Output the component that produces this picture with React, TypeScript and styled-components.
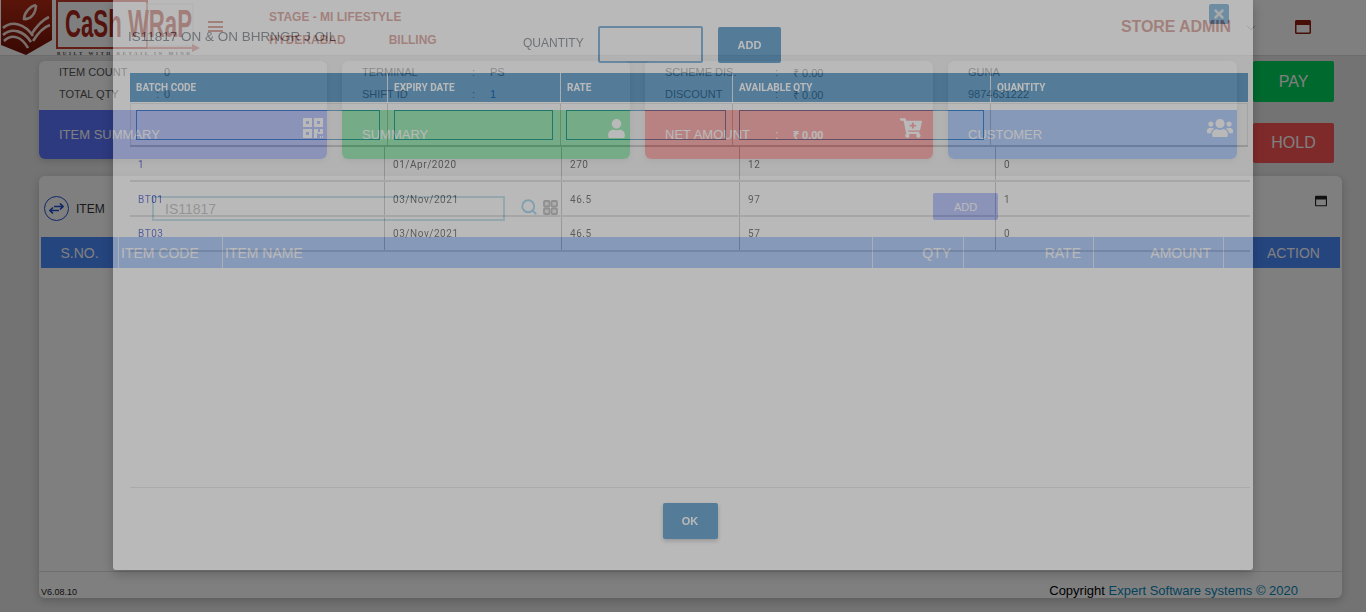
import React from "react";
import styled, { createGlobalStyle } from "styled-components";
import { ChevronDown, Search } from "lucide-react";
import { FaCartPlus, FaRegWindowMaximize, FaTimes, FaUser, FaUsers } from "react-icons/fa";

const Global = createGlobalStyle`
  html, body { margin: 0; padding: 0; height: 612px; overflow: hidden; background: #e6e6e6; }
  * { box-sizing: border-box; }
  body { font-family: "Liberation Sans", Arial, sans-serif; }
`;

const navRed = "#a83024";

const Page = styled.div`
  width: 1366px;
  height: 612px;
  display: flex;
  flex-direction: column;
  overflow: hidden;
`;
const Nav = styled.header`
  height: 56px;
  flex: none;
  background: #fff;
  border-bottom: 1px solid #d8d8d8;
  display: flex;
  align-items: stretch;
`;
const LogoWrap = styled.div`
  width: 200px;
  flex: none;
  display: flex;
`;
const Burger = styled.div`
  width: 15px;
  height: 11px;
  margin: 21px 0 0 8px;
  border-top: 2px solid ${navRed};
  border-bottom: 2px solid ${navRed};
  position: relative;
  &::after { content: ""; position: absolute; left: 0; right: 0; top: 2.5px; height: 2px; background: ${navRed}; }
`;
const NavInfo = styled.div`
  margin-left: 46px;
  padding-top: 10px;
  width: 300px;
  color: ${navRed};
  font-size: 12px;
  font-weight: 700;
  display: flex;
  flex-direction: column;
  gap: 9px;
`;
const NavLine = styled.div`
  height: 14px;
  display: flex;
  gap: 43px;
  white-space: nowrap;
`;
const NavRight = styled.div`
  margin-left: auto;
  display: flex;
  align-items: center;
  height: 54px;
  color: ${navRed};
  padding-right: 55px;
`;
const Admin = styled.span`
  font-size: 16px;
  font-weight: 700;
  letter-spacing: -.1px;
`;
const Chevron = styled.span`
  display: flex;
  margin: 2px 0 0 13px;
  color: #555;
`;
const NavWindow = styled.span`
  display: flex;
  margin-left: 37px;
  font-size: 16px;
  color: #8f1f0c;
  stroke: #8f1f0c;
  stroke-width: 24px;
`;

const SummaryRow = styled.section`
  height: 115px;
  margin-top: 5px;
  padding-left: 39px;
  display: flex;
  gap: 15px;
  flex: none;
`;
const Card = styled.div`
  width: ${p => p.$w ?? 288}px;
  height: 98px;
  border-radius: 6px;
  overflow: hidden;
  background: #fff;
  box-shadow: 0 2px 6px rgba(0,0,0,.15);
  display: flex;
  flex-direction: column;
`;
const CardInfo = styled.div`
  height: 49px;
  padding: 0 0 0 20px;
  font-size: 11px;
  color: #555;
`;
const InfoLine = styled.div`
  height: 22px;
  display: flex;
  align-items: center;
`;
const InfoLabel = styled.span`
  width: ${p => p.$w ?? 110}px;
  flex: none;
  white-space: nowrap;
`;
const InfoColon = styled.span`
  width: ${p => p.$w ?? 18}px;
  flex: none;
`;
const InfoValue = styled.span`
  color: ${p => p.$c ?? "inherit"};
`;
const CardBar = styled.div`
  height: 49px;
  background: ${p => p.$bg};
  color: #fff;
  font-size: 13px;
  padding: 0 ${p => p.$pr ?? 4}px 0 20px;
  display: flex;
  align-items: center;
  justify-content: space-between;
`;
const BarIcon = styled.span`
  display: flex;
  margin: 0 0 ${p => p.$up ?? 13}px 0;
  font-size: ${p => p.$size ?? 22}px;
`;
const NetValue = styled.b`
  font-size: 11px;
  font-weight: 700;
`;
const ActionCol = styled.div`
  width: 81px;
  display: flex;
  flex-direction: column;
  gap: 21px;
  margin-left: 1px;
`;
const ActionBtn = styled.div`
  height: ${p => p.$h}px;
  background: ${p => p.$bg};
  color: #fff;
  font-size: 16px;
  border-radius: 2px;
  display: flex;
  align-items: center;
  justify-content: center;
`;

const Panel = styled.section`
  width: 1303px;
  height: 422px;
  margin-left: 39px;
  background: #fff;
  border-radius: 6px;
  box-shadow: 0 3px 8px rgba(0,0,0,.2);
  display: flex;
  flex-direction: column;
  flex: none;
`;
const PanelHead = styled.div`
  height: 61px;
  padding: 17px 15px 0 5px;
  display: flex;
  align-items: flex-start;
  flex: none;
`;
const RoundIcon = styled.span`
  width: 25px;
  height: 25px;
  margin-top: 3px;
  border: 1px solid #2050d0;
  border-radius: 50%;
  display: flex;
  align-items: center;
  justify-content: center;
  color: #2050d0;
  flex: none;
`;
const ItemLabel = styled.span`
  margin: 9px 0 0 7px;
  font-size: 12px;
  color: #333;
  width: 76px;
`;
const ItemInput = styled.div`
  width: 353px;
  height: 25px;
  margin-top: 3px;
  border: 2px solid #7db8d4;
  padding-left: 11px;
  display: flex;
  align-items: center;
  font-size: 14px;
  color: #777;
`;
const SearchIcon = styled.span`
  display: flex;
  margin: 5px 0 0 15px;
  color: #2f9fd6;
`;
const GridIcon = styled.span`
  display: flex;
  margin: 7px 0 0 5px;
`;
const PanelAdd = styled.div`
  width: 65px;
  height: 27px;
  margin-left: 375px;
  background: #5a74ff;
  border-radius: 2px;
  color: #fff;
  font-size: 11px;
  display: flex;
  align-items: center;
  justify-content: center;
`;
const PanelWindow = styled.span`
  display: flex;
  margin: 2px 0 0 auto;
  font-size: 12px;
  color: #222;
  stroke: #222;
  stroke-width: 24px;
`;
const TableHead = styled.div`
  margin: 0 2px;
  height: 31px;
  background: #4a8aff;
  color: #fff;
  font-size: 14px;
  display: grid;
  grid-template-columns: 77px 104px 650px 91px 130px 130px 117px;
  flex: none;
`;
const HeadCell = styled.div`
  padding: 0 ${p => p.$pad ?? 2}px;
  border-left: ${p => (p.$first ? "0" : "1px solid rgba(255,255,255,.7)")};
  display: flex;
  align-items: center;
  justify-content: ${p => p.$j ?? "flex-start"};
  white-space: nowrap;
`;
const PanelBody = styled.div`
  flex: 1;
`;
const PanelFoot = styled.footer`
  height: 27px;
  flex: none;
  border-top: 1px solid #ddd;
  padding: 0 44px 0 2px;
  display: flex;
  justify-content: space-between;
  align-items: flex-end;
`;
const Version = styled.span`
  font-size: 9px;
  padding-bottom: 1px;
  color: #222;
`;
const Copy = styled.span`
  font-size: 13px;
  color: #000;
  a { color: #0a86b8; text-decoration: none; }
`;

const Overlay = styled.div`
  position: fixed;
  inset: 0;
  background: rgba(0,0,0,.5);
`;
const Modal = styled.div`
  position: fixed;
  left: 113px;
  top: 0;
  width: 1140px;
  height: 570px;
  background: #fff;
  opacity: .45;
  border-radius: 0 0 3px 3px;
  display: flex;
  flex-direction: column;
  padding: 0 3px 0 17px;
  box-shadow: 0 4px 12px rgba(0,0,0,.5);
  font-family: Roboto, "Liberation Sans", sans-serif;
`;
const ModalHead = styled.div`
  height: 73px;
  flex: none;
  position: relative;
  display: flex;
  align-items: flex-start;
`;
const ModalTitle = styled.h4`
  margin: 29px 0 0 -2px;
  width: 395px;
  font-family: "Liberation Sans", sans-serif;
  font-size: 13.5px;
  font-weight: 400;
  line-height: 16px;
  color: #59626a;
  white-space: nowrap;
`;
const QtyLabel = styled.label`
  width: 75px;
  margin-top: 36px;
  font-family: "Liberation Sans", sans-serif;
  font-size: 12px;
  line-height: 14px;
  color: #59626a;
`;
const QtyInput = styled.div`
  width: 105px;
  height: 37px;
  margin-top: 26px;
  border: 2px solid #4a93c8;
  border-radius: 2px;
`;
const QtyAdd = styled.div`
  width: 63px;
  height: 36px;
  margin: 27px 0 0 15px;
  background: #1f78b8;
  border-radius: 2px;
  color: #fff;
  font-family: "Liberation Sans", sans-serif;
  font-size: 11px;
  font-weight: 700;
  display: flex;
  align-items: center;
  justify-content: center;
`;
const CloseBtn = styled.div`
  position: absolute;
  top: 4px;
  right: 21px;
  width: 20px;
  height: 20px;
  background: #5a9ccc;
  color: #ddd;
  border-radius: 2px;
  display: flex;
  align-items: center;
  justify-content: center;
  font-size: 14px;
`;
const BatchHead = styled.div`
  height: 29px;
  width: 1118px;
  background: #1f78b8;
  color: #fff;
  font-size: 10px;
  font-weight: 700;
  display: grid;
  grid-template-columns: 257px 173px 172px 258px 258px;
  flex: none;
`;
const BatchHeadCell = styled.div`
  padding-left: 6px;
  border-left: ${p => (p.$first ? "0" : "1px solid rgba(255,255,255,.8)")};
  display: flex;
  align-items: center;
  white-space: nowrap;
`;
const FilterRow = styled.div`
  height: 44px;
  width: 1118px;
  margin-top: 1px;
  border-top: 1px solid #dedede;
  border-bottom: 2px solid #c2c2c2;
  display: grid;
  grid-template-columns: 257px 173px 172px 258px 258px;
  flex: none;
`;
const FilterCell = styled.div`
  padding: 6px ${p => p.$pr ?? 6}px 0 ${p => p.$pl ?? 6}px;
  border-left: ${p => (p.$first ? "1px solid #ddd" : "1px solid #c4c4c4")};
  border-right: ${p => (p.$last ? "1px solid #ddd" : "0")};
`;
const FilterInput = styled.div`
  height: 30px;
  border: 1px solid #3f8fc4;
  width: 100%;
`;
const DataRow = styled.div`
  height: 35px;
  width: 1120px;
  border-bottom: 2px solid #d4d4d4;
  display: grid;
  grid-template-columns: 254px 177px 178px 256px 255px;
  font-size: 10px;
  letter-spacing: .55px;
  color: #333;
  flex: none;
  &:last-of-type { border-bottom: 1px solid #cfcfcf; height: 33px; }
`;
const DataCell = styled.div`
  padding: ${p => p.$pt}px 0 0 8px;
  border-left: ${p => (p.$first ? "0" : "1px solid #b8b8b8")};
  color: ${p => p.$c ?? "inherit"};
  line-height: 12px;
`;
const ModalFoot = styled.div`
  margin-top: auto;
  height: 83px;
  border-top: 1px solid #ddd;
  display: flex;
  justify-content: center;
  padding: 15px 0 0 0;
  flex: none;
`;
const OkBtn = styled.div`
  width: 55px;
  height: 36px;
  background: #1f78b8;
  border-radius: 2px;
  color: #fff;
  font-family: "Liberation Sans", sans-serif;
  font-size: 11px;
  font-weight: 700;
  display: flex;
  align-items: center;
  justify-content: center;
  box-shadow: 0 2px 4px rgba(0,0,0,.3);
`;

const Logo = () => (
  <svg width="200" height="56" viewBox="0 0 200 56">
    <defs>
      <linearGradient id="sh" x1="0" y1="0" x2="0" y2="1">
        <stop offset="0" stopColor="#b52a14" />
        <stop offset="1" stopColor="#701006" />
      </linearGradient>
    </defs>
    <path d="M1 0H52V40L26 55L1 45Z" fill="url(#sh)" />
    <path d="M3 28C12 20 25 24 33 36M3 35C12 27 24 31 31 42M4 41C12 33 22 37 28 48M36 5C30 6 24 13 24 19C30 20 36 14 36 5M31 35C36 27 42 20 49 17M33 41C38 33 44 27 50 25" stroke="#f3dcd4" strokeWidth="2.6" fill="none" />
    <rect x="57" y="1" width="90" height="47" fill="none" stroke="#c0392b" strokeWidth="2" />
    <rect x="147" y="4" width="46" height="42" fill="none" stroke="#ddd" strokeWidth="1" />
    <text x="65" y="37" fontFamily="Liberation Sans" fontWeight="700" fontSize="39" fill="#a8281a" textLength="127" lengthAdjust="spacingAndGlyphs">CaSh WRaP</text>
    <path d="M147 47H192V44L200 48L192 52V49H147Z" fill="#d9736a" />
    <text x="57" y="55" fontFamily="Liberation Serif" fontSize="5" fontWeight="700" fill="#444" textLength="133" lengthAdjust="spacing">BUILT WITH RETAIL IN MIND</text>
  </svg>
);
const QrMark = () => (
  <svg width="20" height="20" viewBox="0 0 20 20" fill="#fff">
    <path d="M0 0h9v9H0zM3 3v3h3V3zM11 0h9v9h-9zM14 3v3h3V3zM0 11h9v9H0zM3 14v3h3v-3z" fillRule="evenodd" />
    <path d="M11 11h4v3h2v-3h3v5h-5v-1h-1v5h-3zM17 18h1v2h-1zM19 18h1v2h-1z" />
  </svg>
);
const Swap = () => (
  <svg width="15" height="11" viewBox="0 0 15 11" fill="none" stroke="currentColor" strokeWidth="1.7">
    <path d="M1 7.5H10M4 4.5L1 7.5L4 10.5M14 3.5H5M11 .5L14 3.5L11 6.5" />
  </svg>
);
const Tiles = () => (
  <svg width="15" height="15" viewBox="0 0 15 15" fill="#cfcfcf" stroke="#666" strokeWidth="1.8">
    <rect x="1" y="1" width="5.5" height="5.5" rx="1" />
    <rect x="8.5" y="1" width="5.5" height="5.5" rx="1" />
    <rect x="1" y="8.5" width="5.5" height="5.5" rx="1" />
    <rect x="8.5" y="8.5" width="5.5" height="5.5" rx="1" />
  </svg>
);

const rows = [
  ["1", "01/Apr/2020", "270", "12", "0"],
  ["BT01", "03/Nov/2021", "46.5", "97", "1"],
  ["BT03", "03/Nov/2021", "46.5", "57", "0"],
];
const batchCols = ["BATCH CODE", "EXPIRY DATE", "RATE", "AVAILABLE QTY", "QUANTITY"];
const filterPads = [{ pl: 5, pr: 7 }, { pl: 6, pr: 7 }, { pl: 5, pr: 6 }, { pl: 6, pr: 6 }, { pl: 6, pr: 6 }];

export default function App() {
  return (
    <>
      <Global />
      <Page>
        <Nav>
          <LogoWrap><Logo /></LogoWrap>
          <Burger />
          <NavInfo>
            <NavLine>STAGE - MI LIFESTYLE</NavLine>
            <NavLine><span>HYDERABAD</span><span>BILLING</span></NavLine>
          </NavInfo>
          <NavRight>
            <Admin>STORE ADMIN</Admin>
            <Chevron><ChevronDown size={14} strokeWidth={1} /></Chevron>
            <NavWindow><FaRegWindowMaximize /></NavWindow>
          </NavRight>
        </Nav>
        <SummaryRow>
          <Card>
            <CardInfo>
              <InfoLine><InfoLabel $w={105}>ITEM COUNT</InfoLabel>0</InfoLine>
              <InfoLine><InfoLabel $w={97}>TOTAL QTY</InfoLabel><InfoColon $w={8}>:</InfoColon>0</InfoLine>
            </CardInfo>
            <CardBar $bg="#5a74ff">ITEM SUMMARY<BarIcon><QrMark /></BarIcon></CardBar>
          </Card>
          <Card>
            <CardInfo>
              <InfoLine><InfoLabel>TERMINAL</InfoLabel><InfoColon>:</InfoColon>PS</InfoLine>
              <InfoLine><InfoLabel>SHIFT ID</InfoLabel><InfoColon>:</InfoColon><InfoValue $c="#1a5fb4">1</InfoValue></InfoLine>
            </CardInfo>
            <CardBar $bg="#0acc48">SUMMARY<BarIcon $size={19}><FaUser /></BarIcon></CardBar>
          </Card>
          <Card>
            <CardInfo>
              <InfoLine><InfoLabel>SCHEME DIS.</InfoLabel><InfoColon>:</InfoColon>₹ 0.00</InfoLine>
              <InfoLine><InfoLabel>DISCOUNT</InfoLabel><InfoColon>:</InfoColon>₹ 0.00</InfoLine>
            </CardInfo>
            <CardBar $bg="#ff3838" $pr={11}>
              <InfoLine>
                <InfoLabel>NET AMOUNT</InfoLabel><InfoColon>:</InfoColon><NetValue>₹ 0.00</NetValue>
              </InfoLine>
              <BarIcon $size={22}><FaCartPlus /></BarIcon>
            </CardBar>
          </Card>
          <Card $w={289}>
            <CardInfo>
              <InfoLine>GUNA</InfoLine>
              <InfoLine>9874631222</InfoLine>
            </CardInfo>
            <CardBar $bg="#4a8aff">CUSTOMER<BarIcon $size={26} $up={14}><FaUsers /></BarIcon></CardBar>
          </Card>
          <ActionCol>
            <ActionBtn $h={41} $bg="#00d45c">PAY</ActionBtn>
            <ActionBtn $h={40} $bg="#ff5454">HOLD</ActionBtn>
          </ActionCol>
        </SummaryRow>
        <Panel>
          <PanelHead>
            <RoundIcon><Swap /></RoundIcon>
            <ItemLabel>ITEM</ItemLabel>
            <ItemInput>IS11817</ItemInput>
            <SearchIcon><Search size={18} strokeWidth={2.4} /></SearchIcon>
            <GridIcon><Tiles /></GridIcon>
            <PanelAdd>ADD</PanelAdd>
            <PanelWindow><FaRegWindowMaximize /></PanelWindow>
          </PanelHead>
          <TableHead>
            <HeadCell $first $j="center" $pad={0}>S.NO.</HeadCell>
            <HeadCell>ITEM CODE</HeadCell>
            <HeadCell>ITEM NAME</HeadCell>
            <HeadCell $j="flex-end" $pad={12}>QTY</HeadCell>
            <HeadCell $j="flex-end" $pad={12}>RATE</HeadCell>
            <HeadCell $j="flex-end" $pad={12}>AMOUNT</HeadCell>
            <HeadCell $pad={43}>ACTION</HeadCell>
          </TableHead>
          <PanelBody />
          <PanelFoot>
            <Version>V6.08.10</Version>
            <Copy>Copyright <a>Expert Software systems © 2020</a></Copy>
          </PanelFoot>
        </Panel>
      </Page>
      <Overlay />
      <Modal>
        <ModalHead>
          <ModalTitle>IS11817 ON &amp; ON BHRNGR J OIL</ModalTitle>
          <QtyLabel>QUANTITY</QtyLabel>
          <QtyInput />
          <QtyAdd>ADD</QtyAdd>
          <CloseBtn><FaTimes /></CloseBtn>
        </ModalHead>
        <BatchHead>
          {batchCols.map((c, i) => <BatchHeadCell key={c} $first={i === 0}>{c}</BatchHeadCell>)}
        </BatchHead>
        <FilterRow>
          {batchCols.map((c, i) => (
            <FilterCell key={c} $first={i === 0} $last={i === 4} $pl={filterPads[i].pl} $pr={filterPads[i].pr}>
              {i < 4 && <FilterInput />}
            </FilterCell>
          ))}
        </FilterRow>
        {rows.map((r, ri) => (
          <DataRow key={r[0]}>
            {r.map((v, i) => (
              <DataCell key={i} $first={i === 0} $pt={ri === 2 ? 11 : 12} $c={i === 0 ? "#2030c0" : undefined}>{v}</DataCell>
            ))}
          </DataRow>
        ))}
        <ModalFoot><OkBtn>OK</OkBtn></ModalFoot>
      </Modal>
    </>
  );
}
